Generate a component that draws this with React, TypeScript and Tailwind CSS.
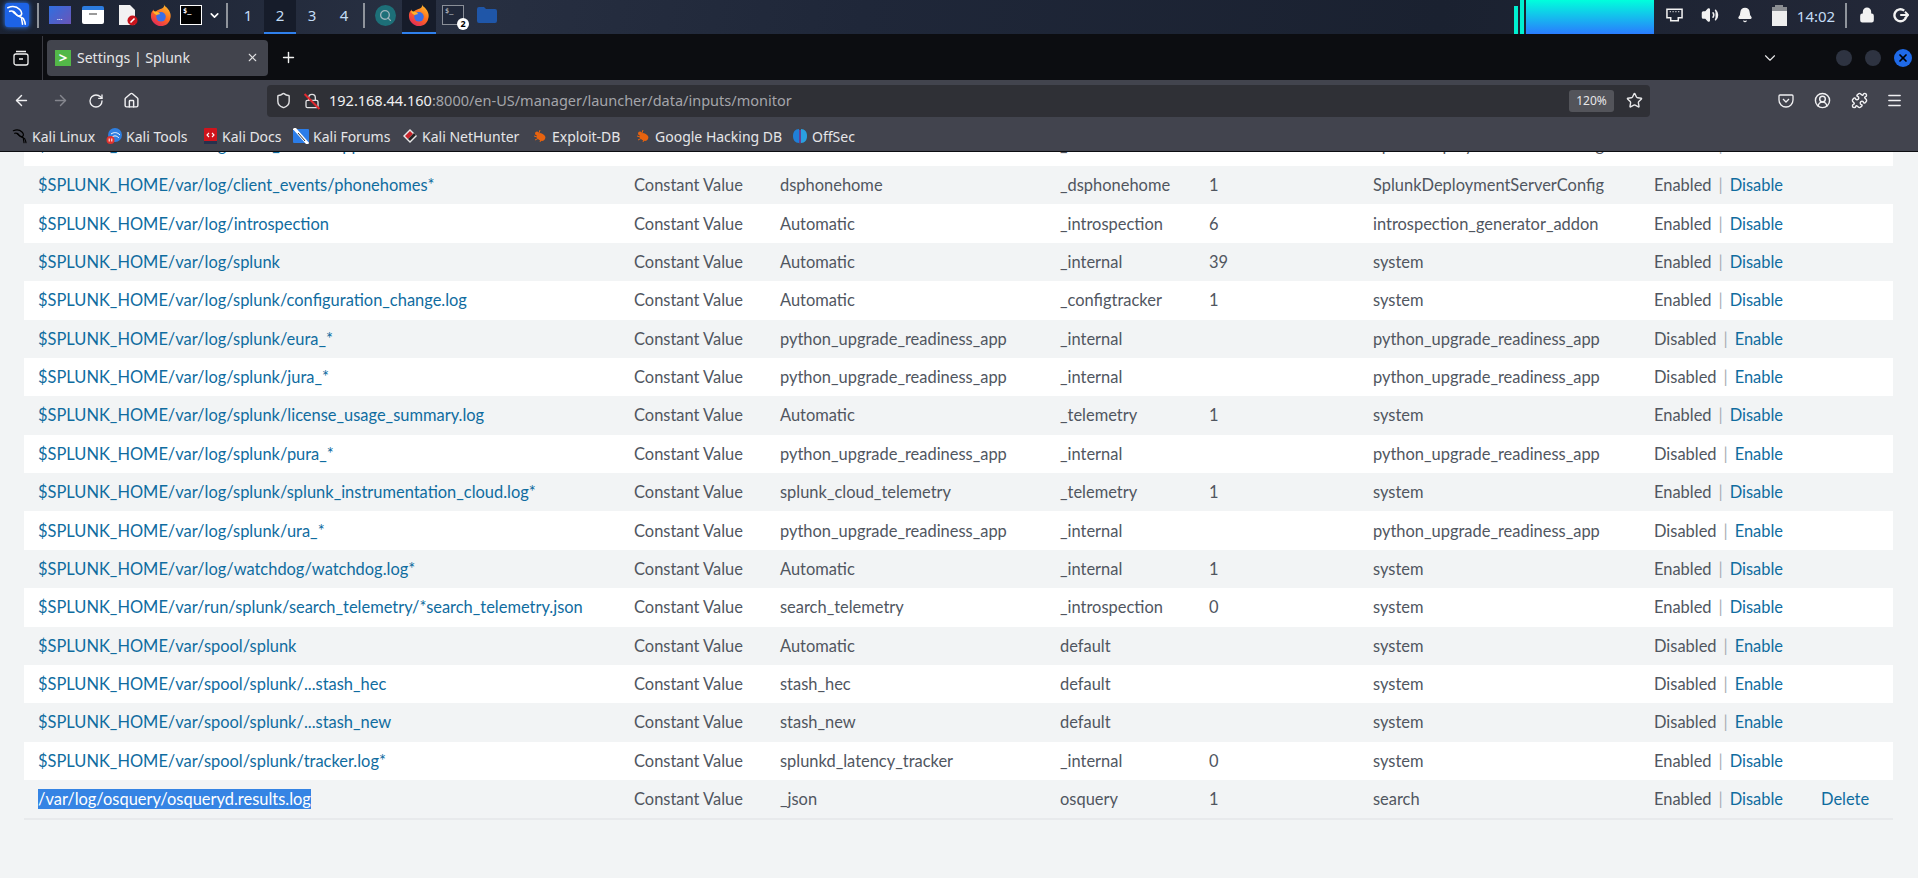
import React from 'react';
import { ArrowLeft, ArrowRight, RotateCw, Home, Shield, Lock, Star, X, Plus, ChevronDown, Menu, Puzzle, CircleUserRound, Volume2, Bell, Search } from 'lucide-react';

type Row = [string, string, string, string, string, boolean, boolean?];

const ROWS: Row[] = [
  ['$SPLUNK_HOME/var/log/client_events/phonehomes*', 'dsphonehome', '_dsphonehome', '1', 'SplunkDeploymentServerConfig', true],
  ['$SPLUNK_HOME/var/log/introspection', 'Automatic', '_introspection', '6', 'introspection_generator_addon', true],
  ['$SPLUNK_HOME/var/log/splunk', 'Automatic', '_internal', '39', 'system', true],
  ['$SPLUNK_HOME/var/log/splunk/configuration_change.log', 'Automatic', '_configtracker', '1', 'system', true],
  ['$SPLUNK_HOME/var/log/splunk/eura_*', 'python_upgrade_readiness_app', '_internal', '', 'python_upgrade_readiness_app', false],
  ['$SPLUNK_HOME/var/log/splunk/jura_*', 'python_upgrade_readiness_app', '_internal', '', 'python_upgrade_readiness_app', false],
  ['$SPLUNK_HOME/var/log/splunk/license_usage_summary.log', 'Automatic', '_telemetry', '1', 'system', true],
  ['$SPLUNK_HOME/var/log/splunk/pura_*', 'python_upgrade_readiness_app', '_internal', '', 'python_upgrade_readiness_app', false],
  ['$SPLUNK_HOME/var/log/splunk/splunk_instrumentation_cloud.log*', 'splunk_cloud_telemetry', '_telemetry', '1', 'system', true],
  ['$SPLUNK_HOME/var/log/splunk/ura_*', 'python_upgrade_readiness_app', '_internal', '', 'python_upgrade_readiness_app', false],
  ['$SPLUNK_HOME/var/log/watchdog/watchdog.log*', 'Automatic', '_internal', '1', 'system', true],
  ['$SPLUNK_HOME/var/run/splunk/search_telemetry/*search_telemetry.json', 'search_telemetry', '_introspection', '0', 'system', true],
  ['$SPLUNK_HOME/var/spool/splunk', 'Automatic', 'default', '', 'system', false],
  ['$SPLUNK_HOME/var/spool/splunk/...stash_hec', 'stash_hec', 'default', '', 'system', false],
  ['$SPLUNK_HOME/var/spool/splunk/...stash_new', 'stash_new', 'default', '', 'system', false],
  ['$SPLUNK_HOME/var/spool/splunk/tracker.log*', 'splunkd_latency_tracker', '_internal', '0', 'system', true],
  ['/var/log/osquery/osqueryd.results.log', '_json', 'osquery', '1', 'search', true, true],
];

const BOOKMARKS: [string, React.ReactNode, string][] = [
  ['Kali Linux', <Dragon key="a" className="w-4 h-4 text-black" />, 'w-[94px]'],
  ['Kali Tools', <KaliTools key="b" />, 'w-[96px]'],
  ['Kali Docs', <KaliDocs key="c" />, 'w-[91px]'],
  ['Kali Forums', <KaliForums key="d" />, 'w-[109px]'],
  ['Kali NetHunter', <NetHunter key="e" />, 'w-[130px]'],
  ['Exploit-DB', <Bug key="f" />, 'w-[103px]'],
  ['Google Hacking DB', <Bug key="g" />, 'w-[157px]'],
  ['OffSec', <OffSec key="h" />, 'w-[70px]'],
];

function Dragon({ className }: { className?: string }) {
  return (
    <svg viewBox="0 0 24 24" fill="none" stroke="currentColor" strokeWidth="1.7" strokeLinecap="round" className={className}>
      <path d="M2 4c5-2 10-1 13 2 3 3 3 7-1 7-3 0-4-3-6-4" />
      <path d="M4 8c3-1 5 0 7 3 2 3 6 3 8 5 1 2 2 4 2 6" />
      <path d="M17 15c0 3 1 5 1 7" />
    </svg>
  );
}

function KaliTools() {
  return (
    <svg viewBox="0 0 16 16" className="w-4 h-4">
      <circle cx="9" cy="7" r="7" fill="#2f7fe0" />
      <path d="M5 6c3-2 6-2 9 1M6 9c3-2 5-1 7 1" stroke="#fff" strokeWidth="1" fill="none" />
      <circle cx="4.5" cy="12" r="4" fill="#e0322d" />
      <path d="M3.2 10.5v3M5.8 10.5v3" stroke="#fff" strokeWidth="1" />
    </svg>
  );
}

function KaliDocs() {
  return (
    <svg viewBox="0 0 16 16" className="w-4 h-4">
      <rect x="2" y="0" width="13" height="15" rx="1" fill="#d0141c" />
      <rect x="2" y="13" width="13" height="3" fill="#27314d" />
      <path d="M7 5 5 7l2 2M10 5l2 2-2 2" stroke="#fff" strokeWidth="1.1" fill="none" />
    </svg>
  );
}

function KaliForums() {
  return (
    <svg viewBox="0 0 16 16" className="w-4 h-4">
      <rect x="0" y="1" width="16" height="14" rx="1" fill="#2b7de9" />
      <path d="M1 0 15 16" stroke="#fff" strokeWidth="3" />
      <path d="M5 5 12 13" stroke="#333" strokeWidth="1" />
    </svg>
  );
}

function NetHunter() {
  return (
    <svg viewBox="0 0 16 16" className="w-4 h-4">
      <path d="M1 8 8 1l7 7-7 7z" fill="#e8e8e8" />
      <path d="M3 8 8 3l3 3-5 5z" fill="#c8242b" />
      <path d="M6 11l6-6 2 2-6 6z" fill="#222" />
    </svg>
  );
}

function Bug() {
  return (
    <svg viewBox="0 0 16 16" className="w-4 h-4" fill="#e8630f">
      <ellipse cx="9" cy="9" rx="4.5" ry="3.5" transform="rotate(30 9 9)" />
      <circle cx="5" cy="5.5" r="2" />
      <path d="M2 8l3 1M3 12l3-1.5M8 14l1-2.5M8 2l-1 3" stroke="#e8630f" strokeWidth="1" />
    </svg>
  );
}

function OffSec() {
  return (
    <svg viewBox="0 0 16 16" className="w-4 h-4">
      <path d="M7 1C3 1 1 4 1 8s2 7 6 7z" fill="#1f7fd8" />
      <path d="M9 1c4 0 6 3 6 7s-2 7-6 7z" fill="#2a9fe0" />
      <path d="M7.4 2h1.2v12l-.6 2-.6-2z" fill="#7a3fc8" />
    </svg>
  );
}

function Firefox() {
  return (
    <svg viewBox="0 0 24 24" className="w-[22px] h-[24px]">
      <defs>
        <linearGradient id="fx" x1="0.8" y1="0" x2="0.2" y2="1">
          <stop offset="0" stopColor="#ffc12e" />
          <stop offset="0.5" stopColor="#ff6a1f" />
          <stop offset="1" stopColor="#e0245e" />
        </linearGradient>
      </defs>
      <path d="M15 0c1 3 3 3 5 6 3 4 3 8 2 10-1 5-5 8-10 8C6 24 1 19 1 13c0-3 1-5 3-7 0 2 1 3 2 3 2-3 5-3 7-4 2-1 3-3 2-5z" fill="url(#fx)" />
      <circle cx="12" cy="14" r="5.2" fill="#3a6ee8" />
      <path d="M3 8c3 0 6 0 8 3l-4 1c-2-1-3-2-4-4z" fill="#ffb52e" />
    </svg>
  );
}

function Terminal({ dim }: { dim?: boolean }) {
  return (
    <div className={dim ? "w-[22px] h-[20px] border border-[#8a8f98] bg-[#20283a] text-[#a4a8b0] font-['DejaVu_Sans_Mono',monospace] text-[7px] font-bold leading-[10px] pl-[2px]" : "w-[22px] h-[20px] border border-white bg-black text-white font-['DejaVu_Sans_Mono',monospace] text-[7px] font-bold leading-[10px] pl-[2px]"}>
      $_
    </div>
  );
}

function Slot({ w, active, children }: { w: string; active?: boolean; children?: React.ReactNode }) {
  return (
    <div className={`${w} h-full flex items-center justify-center pb-[2px] border-b-2 ${active ? 'border-[#2f80ed] bg-[#161c2a]' : 'border-transparent'}`}>
      {children}
    </div>
  );
}

function TaskSep() {
  return <div className="w-[2px] h-[25px] bg-[#8f949c]" />;
}

function TaskBar() {
  return (
    <div className="h-[35px] shrink-0 flex items-stretch bg-[linear-gradient(100deg,#1b2232_0%,#283042_22%,#1f2739_45%,#1a2130_75%,#232838_100%)] border-b border-[#0c0d11] font-['Noto_Sans',sans-serif]">
      <Slot w="w-[34px]">
        <div className="w-6 h-6 rounded-[3px] bg-[#1d63e6] shadow-[0_0_5px_#2f80ff] flex items-center justify-center">
          <Dragon className="w-[22px] h-[22px] text-white" />
        </div>
      </Slot>
      <Slot w="w-[8px]"><TaskSep /></Slot>
      <Slot w="w-[35px]">
        <div className="w-[22px] h-[18px] bg-[linear-gradient(135deg,#2f6fe0,#6a55b8)] text-white text-[7px] leading-[24px] text-center">...</div>
      </Slot>
      <Slot w="w-[32px]">
        <div className="w-[22px] h-[18px] rounded-[2px] bg-white border-t-[4px] border-[#2c7ce0] flex justify-center pt-[3px]">
          <div className="w-[8px] h-[2px] bg-[#9a9a9a]" />
        </div>
      </Slot>
      <Slot w="w-[37px]">
        <svg viewBox="0 0 22 22" className="w-[22px] h-[22px]">
          <path d="M2 1h11l5 5v15H2z" fill="#f2f2f2" />
          <circle cx="15.5" cy="16.5" r="5" fill="#c8141c" />
          <path d="M13.5 18.5l4-4" stroke="#fff" strokeWidth="1.6" />
        </svg>
      </Slot>
      <Slot w="w-[30px]"><Firefox /></Slot>
      <Slot w="w-[30px]"><Terminal /></Slot>
      <Slot w="w-[16px]"><ChevronDown className="w-[13px] h-[13px] text-white" strokeWidth={3} /></Slot>
      <Slot w="w-[10px]"><TaskSep /></Slot>
      {['1', '2', '3', '4'].map((n) => (
        <Slot key={n} w="w-[32px]" active={n === '2'}>
          <span className="text-[15px] text-[#c3dcf5]">{n}</span>
        </Slot>
      ))}
      <Slot w="w-[8px]"><TaskSep /></Slot>
      <Slot w="w-[34px]">
        <div className="w-[21px] h-[21px] rounded-full bg-[#1d6f78] flex items-center justify-center">
          <Search className="w-[13px] h-[13px] text-[#9fb4bc]" strokeWidth={2.5} />
        </div>
      </Slot>
      <Slot w="w-[34px]" active><Firefox /></Slot>
      <Slot w="w-[34px]">
        <div className="relative">
          <Terminal dim />
          <span className="absolute -right-[5px] -bottom-[5px] w-[12px] h-[12px] rounded-full bg-white text-black text-[9px] font-bold leading-[12px] text-center">2</span>
        </div>
      </Slot>
      <Slot w="w-[34px]">
        <svg viewBox="0 0 20 16" className="w-[20px] h-[16px]" fill="#1f56a8">
          <path d="M0 2a2 2 0 0 1 2-2h5l2 2h9a2 2 0 0 1 2 2v10a2 2 0 0 1-2 2H2a2 2 0 0 1-2-2z" />
        </svg>
      </Slot>
      <div className="flex-1" />
      <div className="flex items-end gap-[2px] mr-[2px]">
        <div className="w-[4px] h-[28px] bg-[#00f0d0]" />
        <div className="w-[4px] h-[34px] bg-[#00f0d0]" />
        <div className="w-[128px] h-[34px] bg-[linear-gradient(180deg,#00ffdc_0%,#2a7bff_100%)]" />
      </div>
      <Slot w="w-[36px]">
        <svg viewBox="0 0 18 14" className="w-[17px] h-[14px]" fill="none" stroke="#f2f2f2" strokeWidth="1.6">
          <path d="M1 1h16v9h-4v3H5v-3H1z" />
          <path d="M4 3.5h1M7 3.5h1M10 3.5h1M13 3.5h1" strokeWidth="1.4" />
        </svg>
      </Slot>
      <Slot w="w-[36px]"><Volume2 className="w-[18px] h-[18px] text-[#f2f2f2] fill-[#f2f2f2]" /></Slot>
      <Slot w="w-[34px]"><Bell className="w-[16px] h-[16px] text-[#f2f2f2] fill-[#f2f2f2]" /></Slot>
      <Slot w="w-[34px]">
        <div className="flex flex-col items-center">
          <div className="w-[8px] h-[2px] bg-[#8a8d92]" />
          <div className="w-[15px] h-[19px] bg-[#eeeeee] border-t-[4px] border-[#8a8d92]" />
        </div>
      </Slot>
      <div className="w-[40px] flex items-center justify-center pb-[2px] text-[15px] text-[#c3dcf5]">14:02</div>
      <Slot w="w-[20px]"><TaskSep /></Slot>
      <Slot w="w-[22px]"><Lock className="w-[16px] h-[16px] text-[#f2f2f2] fill-[#f2f2f2]" strokeWidth={2.5} /></Slot>
      <div className="w-[12px]" />
      <Slot w="w-[22px]">
        <svg viewBox="0 0 20 20" className="w-[16px] h-[16px]" fill="none" stroke="#f2f2f2" strokeWidth="3">
          <path d="M14 4.5a7.5 7.5 0 1 0 2.5 8" />
          <path d="M9 10h10M15 6l4 4-4 4" strokeWidth="2.4" />
        </svg>
      </Slot>
      <div className="w-[6px]" />
    </div>
  );
}

function TabStrip() {
  return (
    <div className="h-[45px] shrink-0 bg-[#0c0d11] flex items-center font-['Noto_Sans',sans-serif]">
      <div className="w-[42px] flex justify-center">
        <svg viewBox="0 0 16 16" className="w-[16px] h-[16px]" fill="none" stroke="#f2f2f2" strokeWidth="1.3">
          <rect x="1" y="4" width="14" height="11" rx="2" />
          <path d="M3 1.5h10M6 9h4" />
        </svg>
      </div>
      <div className="w-[1px] h-[44px] bg-[#3a3b42]" />
      <div className="ml-[4px] w-[221px] h-[36px] rounded-[4px] bg-[#42444d] flex items-center pl-[8px] pr-[9px]">
        <div className="w-[16px] h-[16px] bg-[#53b848] text-white text-[15px] font-bold leading-[15px] text-center">&gt;</div>
        <span className="ml-[6px] text-[14px] text-[#e6e6e8]">Settings | Splunk</span>
        <X className="ml-auto w-[13px] h-[13px] text-[#e0e0e2]" />
      </div>
      <Plus className="ml-[12px] w-[17px] h-[17px] text-[#f2f2f2]" />
      <div className="flex-1" />
      <ChevronDown className="w-[18px] h-[18px] text-[#e8e8ea]" strokeWidth={1.5} />
      <div className="ml-[57px] w-[16px] h-[16px] rounded-full bg-[#2e3341]" />
      <div className="ml-[13px] w-[16px] h-[16px] rounded-full bg-[#2e3341]" />
      <div className="ml-[13px] mr-[6px] w-[18px] h-[18px] rounded-full bg-[#1f6ae8] flex items-center justify-center">
        <X className="w-[12px] h-[12px] text-black" strokeWidth={3.5} />
      </div>
    </div>
  );
}

function NavBar() {
  return (
    <div className="h-[41px] shrink-0 bg-[#42444e] flex items-center font-['Noto_Sans',sans-serif]">
      <div className="w-[42px] flex justify-center"><ArrowLeft className="w-[17px] h-[17px] text-[#f0f0f2]" /></div>
      <div className="w-[36px] flex justify-center"><ArrowRight className="w-[17px] h-[17px] text-[#85868e]" /></div>
      <div className="w-[36px] flex justify-center"><RotateCw className="w-[16px] h-[16px] text-[#f0f0f2]" /></div>
      <div className="w-[35px] flex justify-center"><Home className="w-[17px] h-[17px] text-[#f0f0f2]" /></div>
      <div className="ml-[118px] w-[1383px] h-[32px] rounded-[4px] bg-[#2f3036] flex items-center">
        <Shield className="ml-[8px] w-[17px] h-[17px] text-[#e0e0e2]" />
        <div className="relative ml-[12px] w-[16px] flex justify-center">
          <Lock className="w-[16px] h-[16px] text-[#e0e0e2]" />
          <div className="absolute left-[7px] top-[-2px] w-[2px] h-[21px] bg-[#e0282e] -rotate-45" />
        </div>
        <span className="ml-[9px] text-[14.5px] text-[#f0f0f2]">192.168.44.160<span className="text-[#a4a5aa]">:8000/en-US/manager/launcher/data/inputs/monitor</span></span>
        <div className="ml-auto h-[22px] w-[45px] rounded-[3px] bg-[#53545a] text-[#e6e6e8] text-[12px] leading-[22px] text-center">120%</div>
        <Star className="ml-[12px] mr-[7px] w-[17px] h-[17px] text-[#e6e6e8]" />
      </div>
      <div className="ml-[127px] w-[18px] flex justify-center">
        <svg viewBox="0 0 16 16" className="w-[16px] h-[16px]" fill="none" stroke="#f0f0f2" strokeWidth="1.3">
          <path d="M2 2h12a1 1 0 0 1 1 1v4a7 7 0 0 1-14 0V3a1 1 0 0 1 1-1z" />
          <path d="M5 6l3 3 3-3" />
        </svg>
      </div>
      <div className="ml-[18px] w-[18px] flex justify-center"><CircleUserRound className="w-[17px] h-[17px] text-[#f0f0f2]" /></div>
      <div className="ml-[19px] w-[18px] flex justify-center"><Puzzle className="w-[17px] h-[17px] text-[#f0f0f2]" /></div>
      <div className="ml-[17px] w-[18px] flex justify-center"><Menu className="w-[17px] h-[17px] text-[#f0f0f2]" /></div>
    </div>
  );
}

function BookmarkBar() {
  return (
    <div className="h-[31px] shrink-0 relative z-10 bg-[#42444e] border-b border-[#0c0d11] flex items-center pl-[12px] font-['Noto_Sans',sans-serif]">
      {BOOKMARKS.map(([label, icon, width]) => (
        <div key={label} className={`${width} flex items-center gap-[4px] shrink-0`}>
          {icon}
          <span className="text-[14px] text-[#e6e6e8] whitespace-nowrap">{label}</span>
        </div>
      ))}
    </div>
  );
}

function InputRow({ row, gray, selected, lifted }: { row: Row; gray: boolean; selected?: boolean; lifted?: boolean }) {
  const [path, sourcetype, index, count, app, enabled, deletable] = row;
  return (
    <div className={`h-[38.375px] px-[14px] grid grid-cols-[596px_146px_280px_149px_164px_281px_167px_auto] items-center ${lifted ? '[&>*]:-translate-y-[2px]' : ''} ${gray ? 'bg-[#f2f4f5]' : 'bg-white'}`}>
      {selected ? (
        <div><span className="bg-[#3584e4] text-white">{path}</span></div>
      ) : (
        <a className="text-[#0f6c9f]">{path}</a>
      )}
      <div>Constant Value</div>
      <div>{sourcetype}</div>
      <div>{index}</div>
      <div>{count}</div>
      <div>{app}</div>
      <div className="whitespace-nowrap">
        {enabled ? 'Enabled' : 'Disabled'}
        <span className="mx-[7px] text-[#a8adb4]">|</span>
        <a className="text-[#0f6c9f]">{enabled ? 'Disable' : 'Enable'}</a>
      </div>
      <div>{deletable && <a className="text-[#0f6c9f]">Delete</a>}</div>
    </div>
  );
}

function InputsTable() {
  // row scrolled almost fully under the browser chrome
  const hidden: Row = ['$SPLUNK_HOME/var/log/client_events/appevents', 'dsclient', '_dsclient', '', 'SplunkDeploymentServerConfig', true];
  return (
    <div className="flex-1 min-h-0 overflow-hidden bg-[#f2f4f5] pl-[24px] pr-[25px] font-['Lato',sans-serif] text-[16.45px] leading-[18px] text-[#50565f]">
      <div className="-mt-[24.375px] border-b-2 border-[#e8eaec]">
        <InputRow row={hidden} gray={false} lifted />
        {ROWS.map((row, i) => (
          <InputRow key={row[0]} row={row} gray={i % 2 === 0} selected={i === ROWS.length - 1} />
        ))}
      </div>
    </div>
  );
}

export default function App() {
  return (
    <div className="w-[1918px] h-[878px] flex flex-col overflow-hidden">
      <TaskBar />
      <TabStrip />
      <NavBar />
      <BookmarkBar />
      <InputsTable />
    </div>
  );
}
